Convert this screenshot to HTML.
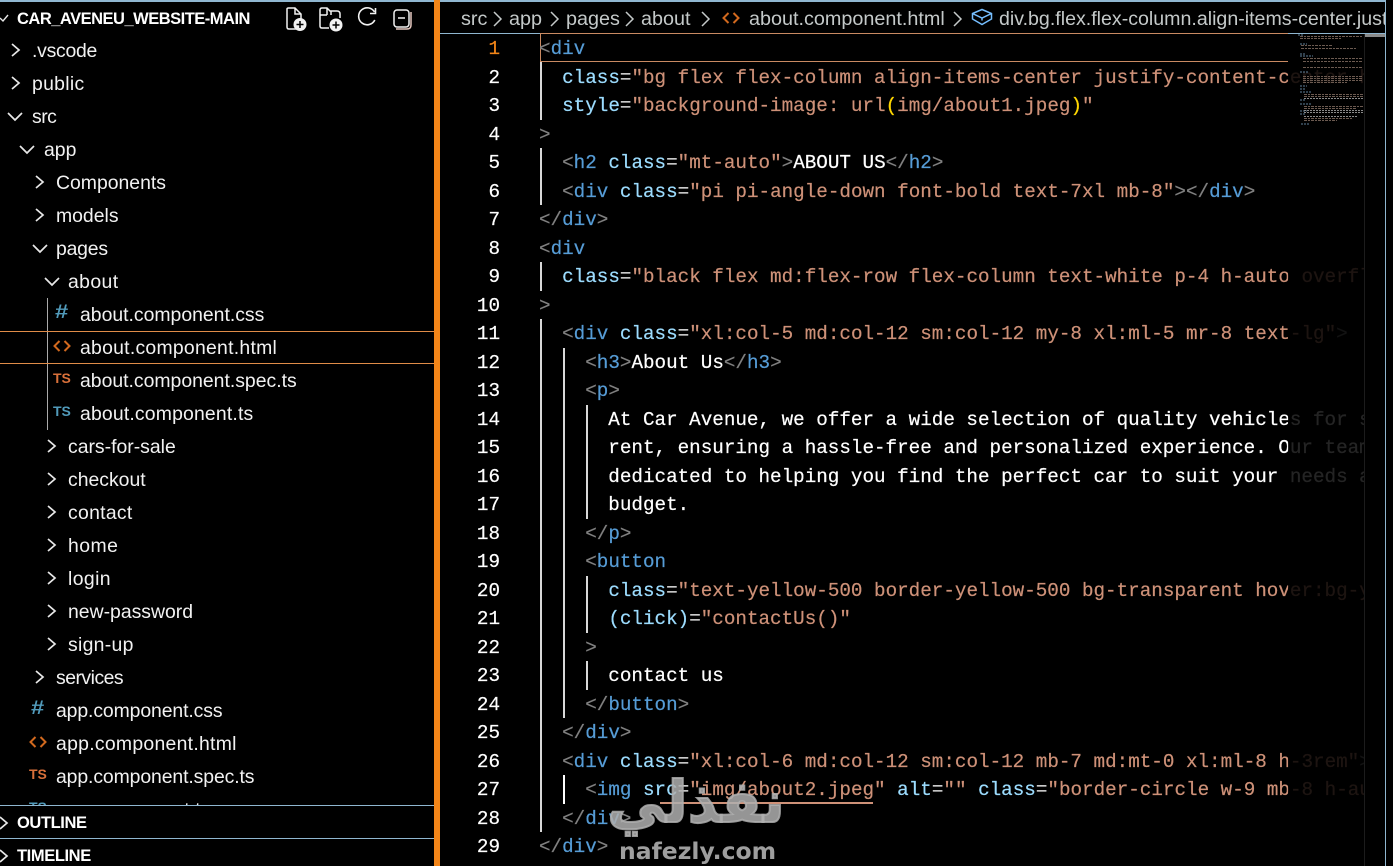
<!DOCTYPE html>
<html><head><meta charset="utf-8"><style>
html,body{margin:0;padding:0;background:#000;width:1393px;height:866px;overflow:hidden}
#r{position:relative;width:1393px;height:866px;overflow:hidden;background:#000}
.a{position:absolute}
.t{position:absolute;font-family:"Liberation Sans",sans-serif;font-size:19.4px;line-height:33px;height:33px;color:#f2f2f2;white-space:pre;margin-top:1px}
.h{font-weight:bold;font-size:16.5px;letter-spacing:-.4px;color:#fff}
.c{position:absolute;width:16px;height:16px}
.c path{fill:none;stroke:#e8e8e8;stroke-width:1.7}
.ic{position:absolute;font-family:"Liberation Sans",sans-serif;font-weight:bold;line-height:33px}
.hs{font-size:19px;transform:scaleX(1.25);transform-origin:0 50%;color:#519aba}
.l{position:absolute;left:539px;height:28.55px;line-height:28.55px;font-family:"Liberation Mono",monospace;font-size:19.25px;color:#fff;white-space:pre;width:826px;overflow:hidden;-webkit-text-stroke:.2px}
.n{position:absolute;left:450px;width:50px;text-align:right;height:28.55px;line-height:28.55px;font-family:"Liberation Mono",monospace;font-size:19.25px;color:#fff;-webkit-text-stroke:.2px}
.g{position:absolute;width:1.5px;background:#d8d8d8}
i{font-style:normal}
.b{color:#808080}.k{color:#569cd6}.p{color:#9cdcfe}.e{color:#d4d4d4}.s{color:#ce9178}.y{color:#ffd700}
.bc{position:absolute;top:2px;line-height:34px;font-family:"Liberation Sans",sans-serif;font-size:19.8px;color:#c4c9c9;white-space:pre}
</style></head><body><div id="r">

<div class="a" style="left:0;top:0;width:1386px;height:2px;background:#8fb6d0"></div>
<div class="a" style="left:434px;top:0;width:6px;height:866px;background:#f38518"></div>

<!-- sidebar -->
<svg class="a" style="left:0;top:10px" width="10" height="16"><path d="M0 8 L3 11 L8 5" fill="none" stroke="#e8e8e8" stroke-width="1.4"/></svg>
<div class="t h" style="left:17px;top:2px;letter-spacing:-.5px">CAR_AVENEU_WEBSITE-MAIN</div>

<svg class="a" style="left:284px;top:5px" width="128" height="28" fill="none" stroke="#f2f2f2" stroke-width="1.5">
<path d="M12 24H5Q3 24 3 22V4Q3 3 4.500 3H11L17 9V14M11 3V9H17"/>
<circle cx="16" cy="19.500" r="6.500" fill="#f2f2f2" stroke="none"/>
<path d="M12.500 19.500H19.500M16 16V23" stroke="#000" stroke-width="1.500"/>
<path d="M45 23H38Q36 23 36 21V5Q36 3 38 3H43L46 6H53Q56 6 56 9V13M43 10H36M43 3V10M47 6V10"/>
<circle cx="52" cy="20" r="6.500" fill="#f2f2f2" stroke="none"/>
<path d="M48.500 20H55.500M52 16.500V23.500" stroke="#000" stroke-width="1.500"/>
<path d="M90.500 7A8.500 8.500 0 1 0 90.800 15" stroke-width="1.600"/>
<path d="M91.500 3V8.500H86" stroke-width="1.600"/>
<rect x="110" y="5" width="15" height="17" rx="3"/>
<path d="M114 13H121"/>
<path d="M127 7V20Q127 24 123 24H112" stroke="#e6c8c0"/>
</svg>

<svg class="c" style="left:8px;top:42px"><path d="M4 2 L11 8 L4 14"/></svg><div class="t" style="left:32px;top:34px;letter-spacing:-.25px">.vscode</div>
<svg class="c" style="left:8px;top:75px"><path d="M4 2 L11 8 L4 14"/></svg><div class="t" style="left:32px;top:67px;letter-spacing:.3px">public</div>
<svg class="c" style="left:7px;top:108px"><path d="M1 5 L8 12 L15 5"/></svg><div class="t" style="left:32px;top:100px;letter-spacing:-.5px">src</div>
<svg class="c" style="left:19px;top:141px"><path d="M1 5 L8 12 L15 5"/></svg><div class="t" style="left:44px;top:133px">app</div>
<svg class="c" style="left:32px;top:174px"><path d="M4 2 L11 8 L4 14"/></svg><div class="t" style="left:56px;top:166px">Components</div>
<svg class="c" style="left:32px;top:207px"><path d="M4 2 L11 8 L4 14"/></svg><div class="t" style="left:56px;top:199px">models</div>
<svg class="c" style="left:32px;top:240px"><path d="M1 5 L8 12 L15 5"/></svg><div class="t" style="left:56px;top:232px;letter-spacing:-.2px">pages</div>
<svg class="c" style="left:44px;top:273px"><path d="M1 5 L8 12 L15 5"/></svg><div class="t" style="left:68px;top:265px;letter-spacing:.4px">about</div>

<div class="a" style="left:47px;top:298px;width:1px;height:132px;background:#aaa"></div>
<div class="a" style="left:0;top:331px;width:434px;height:1px;background:#e08c48"></div>
<div class="a" style="left:0;top:363px;width:434px;height:1px;background:#e08c48"></div>

<div class="ic hs" style="left:55px;top:296px">#</div><div class="t" style="left:80px;top:298px">about.component.css</div>
<svg class="a" style="left:53px;top:338px" width="18" height="16" fill="none" stroke="#d2691e" stroke-width="2"><path d="M6.500 3 L1.500 8 L6.500 13M11.500 3 L16.500 8 L11.500 13"/></svg><div class="t" style="left:80px;top:331px;letter-spacing:.26px">about.component.html</div>
<div class="ic" style="left:53px;top:362px;font-size:14px;color:#d9703a">TS</div><div class="t" style="left:80px;top:364px">about.component.spec.ts</div>
<div class="ic" style="left:53px;top:395px;font-size:14px;color:#519aba">TS</div><div class="t" style="left:80px;top:397px;letter-spacing:.17px">about.component.ts</div>

<svg class="c" style="left:44px;top:438px"><path d="M4 2 L11 8 L4 14"/></svg><div class="t" style="left:68px;top:430px">cars-for-sale</div>
<svg class="c" style="left:44px;top:471px"><path d="M4 2 L11 8 L4 14"/></svg><div class="t" style="left:68px;top:463px">checkout</div>
<svg class="c" style="left:44px;top:504px"><path d="M4 2 L11 8 L4 14"/></svg><div class="t" style="left:68px;top:496px;letter-spacing:.3px">contact</div>
<svg class="c" style="left:44px;top:537px"><path d="M4 2 L11 8 L4 14"/></svg><div class="t" style="left:68px;top:529px;letter-spacing:.45px">home</div>
<svg class="c" style="left:44px;top:570px"><path d="M4 2 L11 8 L4 14"/></svg><div class="t" style="left:68px;top:562px;letter-spacing:.4px">login</div>
<svg class="c" style="left:44px;top:603px"><path d="M4 2 L11 8 L4 14"/></svg><div class="t" style="left:68px;top:595px">new-password</div>
<svg class="c" style="left:44px;top:636px"><path d="M4 2 L11 8 L4 14"/></svg><div class="t" style="left:68px;top:628px;letter-spacing:.3px">sign-up</div>
<svg class="c" style="left:32px;top:669px"><path d="M4 2 L11 8 L4 14"/></svg><div class="t" style="left:56px;top:661px;letter-spacing:-.5px">services</div>

<div class="ic hs" style="left:31px;top:692px">#</div><div class="t" style="left:56px;top:694px;letter-spacing:-.1px">app.component.css</div>
<svg class="a" style="left:29px;top:734px" width="18" height="16" fill="none" stroke="#d2691e" stroke-width="2"><path d="M6.500 3 L1.500 8 L6.500 13M11.500 3 L16.500 8 L11.500 13"/></svg><div class="t" style="left:56px;top:727px;letter-spacing:.28px">app.component.html</div>
<div class="ic" style="left:29px;top:758px;font-size:14px;color:#d9703a">TS</div><div class="t" style="left:56px;top:760px;letter-spacing:-.1px">app.component.spec.ts</div>
<div class="ic" style="left:29px;top:791px;font-size:14px;color:#519aba">TS</div><div class="t" style="left:56px;top:793px">app.component.ts</div>

<div class="a" style="left:0;top:805px;width:434px;height:61px;background:#000"></div>
<div class="a" style="left:0;top:805px;width:434px;height:1px;background:#8fb6d0"></div>
<div class="a" style="left:0;top:838px;width:434px;height:1px;background:#8fb6d0"></div>
<svg class="c" style="left:-4px;top:815px"><path d="M4 2 L11 8 L4 14"/></svg><div class="t h" style="left:17px;top:806px">OUTLINE</div>
<svg class="c" style="left:-4px;top:848px"><path d="M4 2 L11 8 L4 14"/></svg><div class="t h" style="left:17px;top:839px">TIMELINE</div>

<!-- breadcrumbs -->
<div class="bc" style="left:461px">src</div>
<svg class="a" style="left:492px;top:10px" width="12" height="18" fill="none" stroke="#c4c9c9" stroke-width="1.500"><path d="M2 2 L9 9 L2 16"/></svg>
<div class="bc" style="left:509px">app</div>
<svg class="a" style="left:549px;top:10px" width="12" height="18" fill="none" stroke="#c4c9c9" stroke-width="1.500"><path d="M2 2 L9 9 L2 16"/></svg>
<div class="bc" style="left:566px">pages</div>
<svg class="a" style="left:624px;top:10px" width="12" height="18" fill="none" stroke="#c4c9c9" stroke-width="1.500"><path d="M2 2 L9 9 L2 16"/></svg>
<div class="bc" style="left:641px">about</div>
<svg class="a" style="left:700px;top:10px" width="12" height="18" fill="none" stroke="#c4c9c9" stroke-width="1.500"><path d="M2 2 L9 9 L2 16"/></svg>
<svg class="a" style="left:722px;top:10px" width="18" height="16" fill="none" stroke="#d2691e" stroke-width="2"><path d="M6.500 3 L1.500 8 L6.500 13M11.500 3 L16.500 8 L11.500 13"/></svg>
<div class="bc" style="left:749px">about.component.html</div>
<svg class="a" style="left:952px;top:10px" width="12" height="18" fill="none" stroke="#c4c9c9" stroke-width="1.500"><path d="M2 2 L9 9 L2 16"/></svg>
<svg class="a" style="left:971px;top:8px" width="22" height="18" fill="none" stroke="#75beff" stroke-width="1.500"><path d="M11 1.500 L20.500 5.500 V11 L11 16.500 L1.500 11 V5.500 Z M1.500 5.500 L11 10 L20.500 5.500 M11 10 V12.500"/></svg>
<div class="bc" style="left:999px;width:386px;overflow:hidden;font-size:19.6px">div.bg.flex.flex-column.align-items-center.justify-content-center</div>
<div class="a" style="left:440px;top:33px;width:946px;height:1px;background:#8fb6d0"></div>
<div class="a" style="left:1385px;top:0;width:1px;height:866px;background:#8fb6d0"></div>

<!-- active line -->
<div class="a" style="left:540px;top:33px;width:748px;height:29px;border:1px solid #c98a62;border-right:0;box-sizing:border-box"></div>

<!-- guides -->
<div class="g" style="left:540px;top:62px;height:58px"></div>
<div class="g" style="left:540px;top:148px;height:57px"></div>
<div class="g" style="left:540px;top:262px;height:29px"></div>
<div class="g" style="left:540px;top:319px;height:513px"></div>
<div class="g" style="left:563px;top:348px;height:370px"></div>
<div class="g" style="left:586px;top:405px;height:114px"></div>
<div class="g" style="left:586px;top:576px;height:57px"></div>
<div class="g" style="left:586px;top:661px;height:29px"></div>
<div class="g" style="left:563px;top:775px;height:29px;background:#fff"></div>

<!-- line numbers -->
<div class="n" style="top:35px;color:#f38518">1</div>
<div class="n" style="top:64px">2</div>
<div class="n" style="top:92px">3</div>
<div class="n" style="top:121px">4</div>
<div class="n" style="top:149px">5</div>
<div class="n" style="top:178px">6</div>
<div class="n" style="top:206px">7</div>
<div class="n" style="top:235px">8</div>
<div class="n" style="top:263px">9</div>
<div class="n" style="top:292px">10</div>
<div class="n" style="top:320px">11</div>
<div class="n" style="top:349px">12</div>
<div class="n" style="top:377px">13</div>
<div class="n" style="top:406px">14</div>
<div class="n" style="top:434px">15</div>
<div class="n" style="top:463px">16</div>
<div class="n" style="top:491px">17</div>
<div class="n" style="top:520px">18</div>
<div class="n" style="top:548px">19</div>
<div class="n" style="top:577px">20</div>
<div class="n" style="top:605px">21</div>
<div class="n" style="top:634px">22</div>
<div class="n" style="top:662px">23</div>
<div class="n" style="top:691px">24</div>
<div class="n" style="top:719px">25</div>
<div class="n" style="top:748px">26</div>
<div class="n" style="top:776px">27</div>
<div class="n" style="top:805px">28</div>
<div class="n" style="top:833px">29</div>

<!-- code -->
<div class="l" style="top:35px"><i class="b">&lt;</i><i class="k">div</i></div>
<div class="l" style="top:64px">  <i class="p">class</i><i class="e">=</i><i class="s">"bg flex flex-column align-items-center justify-content-center h-screen"</i></div>
<div class="l" style="top:92px">  <i class="p">style</i><i class="e">=</i><i class="s">"background-image: url</i><i class="y">(</i><i class="s">img/about1.jpeg</i><i class="y">)</i><i class="s">"</i></div>
<div class="l" style="top:121px"><i class="b">&gt;</i></div>
<div class="l" style="top:149px">  <i class="b">&lt;</i><i class="k">h2</i> <i class="p">class</i><i class="e">=</i><i class="s">"mt-auto"</i><i class="b">&gt;</i>ABOUT US<i class="b">&lt;/</i><i class="k">h2</i><i class="b">&gt;</i></div>
<div class="l" style="top:178px">  <i class="b">&lt;</i><i class="k">div</i> <i class="p">class</i><i class="e">=</i><i class="s">"pi pi-angle-down font-bold text-7xl mb-8"</i><i class="b">&gt;&lt;/</i><i class="k">div</i><i class="b">&gt;</i></div>
<div class="l" style="top:206px"><i class="b">&lt;/</i><i class="k">div</i><i class="b">&gt;</i></div>
<div class="l" style="top:235px"><i class="b">&lt;</i><i class="k">div</i></div>
<div class="l" style="top:263px">  <i class="p">class</i><i class="e">=</i><i class="s">"black flex md:flex-row flex-column text-white p-4 h-auto overflow-hidden"</i></div>
<div class="l" style="top:292px"><i class="b">&gt;</i></div>
<div class="l" style="top:320px">  <i class="b">&lt;</i><i class="k">div</i> <i class="p">class</i><i class="e">=</i><i class="s">"xl:col-5 md:col-12 sm:col-12 my-8 xl:ml-5 mr-8 text-lg"</i><i class="b">&gt;</i></div>
<div class="l" style="top:349px">    <i class="b">&lt;</i><i class="k">h3</i><i class="b">&gt;</i>About Us<i class="b">&lt;/</i><i class="k">h3</i><i class="b">&gt;</i></div>
<div class="l" style="top:377px">    <i class="b">&lt;</i><i class="k">p</i><i class="b">&gt;</i></div>
<div class="l" style="top:406px">      At Car Avenue, we offer a wide selection of quality vehicles for sale and</div>
<div class="l" style="top:434px">      rent, ensuring a hassle-free and personalized experience. Our team is</div>
<div class="l" style="top:463px">      dedicated to helping you find the perfect car to suit your needs and</div>
<div class="l" style="top:491px">      budget.</div>
<div class="l" style="top:520px">    <i class="b">&lt;/</i><i class="k">p</i><i class="b">&gt;</i></div>
<div class="l" style="top:548px">    <i class="b">&lt;</i><i class="k">button</i></div>
<div class="l" style="top:577px">      <i class="p">class</i><i class="e">=</i><i class="s">"text-yellow-500 border-yellow-500 bg-transparent hover:bg-yellow-500"</i></div>
<div class="l" style="top:605px">      <i class="p">(click)</i><i class="e">=</i><i class="s">"contactUs()"</i></div>
<div class="l" style="top:634px">    <i class="b">&gt;</i></div>
<div class="l" style="top:662px">      contact us</div>
<div class="l" style="top:691px">    <i class="b">&lt;/</i><i class="k">button</i><i class="b">&gt;</i></div>
<div class="l" style="top:719px">  <i class="b">&lt;/</i><i class="k">div</i><i class="b">&gt;</i></div>
<div class="l" style="top:748px">  <i class="b">&lt;</i><i class="k">div</i> <i class="p">class</i><i class="e">=</i><i class="s">"xl:col-6 md:col-12 sm:col-12 mb-7 md:mt-0 xl:ml-8 h-3rem"</i><i class="b">&gt;</i></div>
<div class="l" style="top:776px">    <i class="b">&lt;</i><i class="k">img</i> <i class="p">src</i><i class="e">=</i><i class="s">"img/about2.jpeg"</i> <i class="p">alt</i><i class="e">=</i><i class="s">""</i> <i class="p">class</i><i class="e">=</i><i class="s">"border-circle w-9 mb-8 h-auto"</i> <i class="b">/&gt;</i></div>
<div class="l" style="top:805px">  <i class="b">&lt;/</i><i class="k">div</i><i class="b">&gt;</i></div>
<div class="l" style="top:833px"><i class="b">&lt;/</i><i class="k">div</i><i class="b">&gt;</i></div>
<div class="a" style="left:660px;top:802px;width:213px;height:2px;background:#ce9178"></div>

<!-- fade / minimap -->
<div class="a" style="left:1288px;top:34px;width:77px;height:832px;background:rgba(0,0,0,.86)"></div>
<div class="a" style="left:1364px;top:34px;width:1px;height:832px;background:#1c1c1c"></div>
<div class="a" style="left:1365px;top:34px;width:20px;height:3px;background:#8a8a8a"></div>
<svg class="a" style="left:1297px;top:34px" width="68" height="94" fill="none" stroke-width="1">
<g stroke="#6c5a50" stroke-dasharray="3 1 2 1">
<path d="M3 2.500H66M3 4.500H45M4 11.500H36M4 14.500H60M6 24.500H66M6 27.500H66M6 33.500H66M6 42.500H66M6 44.500H66M6 46.500H66M6 48.500H50M7 60.500H66M7 62.500H66M7 72.500H66M7 74.500H60M7 84.500H55M7 86.500H40"/>
</g>
<g stroke="#5f7f9a" stroke-dasharray="2 1">
<path d="M1 1H6M3 10H10M3 20H8M3 22H16M3 38H12M3 52H10M3 55H9M3 58H14M3 66H9M3 70H14M3 77H10M3 80H8M4 90H12"/>
</g>
<g stroke="#8a8a8a" stroke-dasharray="2 1">
<path d="M7 64.500H66M7 76.500H66M7 78.500H66M7 82.500H60"/>
</g>
</svg>

<!-- watermark -->
<div class="a" dir="rtl" style="left:604px;top:762px;width:184px;text-align:center;font-family:'DejaVu Sans','Noto Sans CJK SC',sans-serif;font-weight:bold;font-size:58px;line-height:80px;color:rgba(175,175,175,.85);-webkit-text-stroke:2px rgba(175,175,175,.85);white-space:nowrap">نفذلي</div>
<div class="a" style="left:619px;top:836px;font-family:'DejaVu Sans',sans-serif;font-weight:bold;font-size:23.5px;line-height:30px;letter-spacing:0;color:rgba(175,175,175,.9);white-space:nowrap">nafezly.com</div>

</div></body></html>
